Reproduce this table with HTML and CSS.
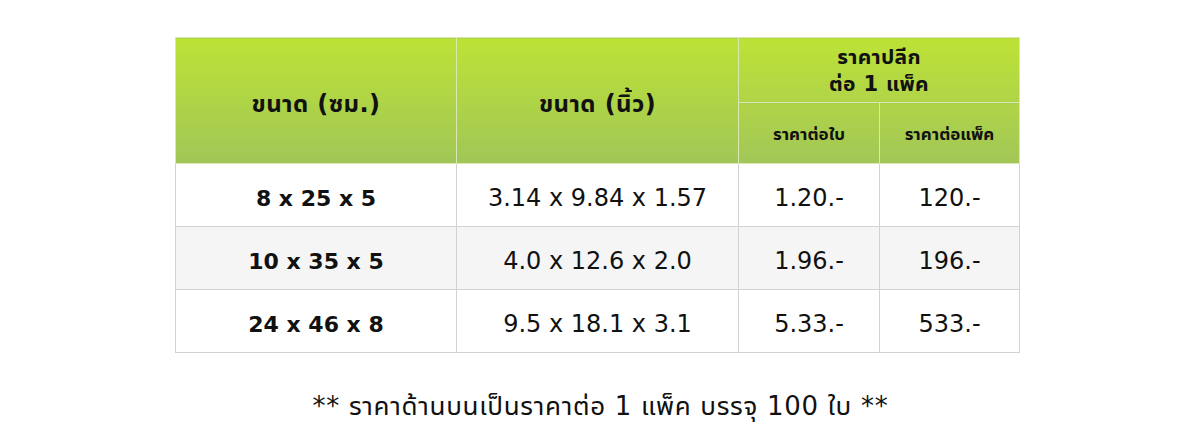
FILE: index.html
```html
<!DOCTYPE html>
<html lang="th">
<head>
<meta charset="utf-8">
<link rel="stylesheet" href="styles.css">
</head>
<body>
<div class="page">
  <table class="price">
    <colgroup>
      <col class="c1"><col class="c2"><col class="c3"><col class="c4">
    </colgroup>
    <thead>
      <tr class="h1">
        <th rowspan="2" class="big">ขนาด (ซม.)</th>
        <th rowspan="2" class="big">ขนาด (นิ้ว)</th>
        <th colspan="2" class="mid">ราคาปลีก<br>ต่อ 1 แพ็ค</th>
      </tr>
      <tr class="h2">
        <th class="small">ราคาต่อใบ</th>
        <th class="small">ราคาต่อแพ็ค</th>
      </tr>
    </thead>
    <tbody>
      <tr><td class="b">8 x 25 x 5</td><td>3.14 x 9.84 x 1.57</td><td>1.20.-</td><td>120.-</td></tr>
      <tr class="alt"><td class="b">10 x 35 x 5</td><td>4.0 x 12.6 x 2.0</td><td>1.96.-</td><td>196.-</td></tr>
      <tr><td class="b">24 x 46 x 8</td><td>9.5 x 18.1 x 3.1</td><td>5.33.-</td><td>533.-</td></tr>
    </tbody>
  </table>
  <p class="note">** ราคาด้านบนเป็นราคาต่อ 1 แพ็ค บรรจุ 100 ใบ **</p>
</div>
</body>
</html>
```
FILE: styles.css
```css
html, body {
  margin: 0;
  padding: 0;
  background: #ffffff;
}
body {
  font-family: "DejaVu Sans", "Noto Sans Thai UI", "Noto Sans Thai", "Noto Sans", sans-serif;
  color: #111111;
}
.page {
  width: 1201px;
  padding-top: 37px;
}
.price {
  border-collapse: collapse;
  margin-left: 175px;
  width: 844px;
  table-layout: fixed;
}
.c1 { width: 281px; }
.c2 { width: 282px; }
.c3 { width: 141px; }
.c4 { width: 140px; }
.price thead th {
  border: 1px solid #d9e7b0;
  color: #111111;
  font-weight: bold;
  text-align: center;
  vertical-align: middle;
  padding: 0;
}
.price thead tr.h1 th.big {
  background: linear-gradient(to bottom, #bce236 0%, #a1c657 100%);
  font-size: 24px;
  letter-spacing: 0.4px;
  padding-top: 4px;
}
.price thead tr.h1 th.mid {
  background: linear-gradient(to bottom, #bce236 0%, #b0d448 100%);
  height: 62px;
  font-size: 21px;
  line-height: 27px;
  letter-spacing: 0.3px;
  padding-top: 2px;
}
.price thead tr.h2 th.small {
  background: linear-gradient(to bottom, #b0d448 0%, #a1c657 100%);
  height: 60px;
  font-size: 17px;
}
.price td {
  border: 1px solid #d2d2d2;
  height: 56px;
  padding: 6px 0 0 0;
  text-align: center;
  vertical-align: middle;
  font-size: 24px;
  color: #111111;
}
.price td.b {
  font-weight: bold;
  font-size: 22px;
}
.price tr.alt td {
  background: #f5f5f5;
}
.note {
  margin: 34px 0 0 0;
  text-align: center;
  font-size: 26px;
  letter-spacing: 0.7px;
  color: #111111;
}
```
